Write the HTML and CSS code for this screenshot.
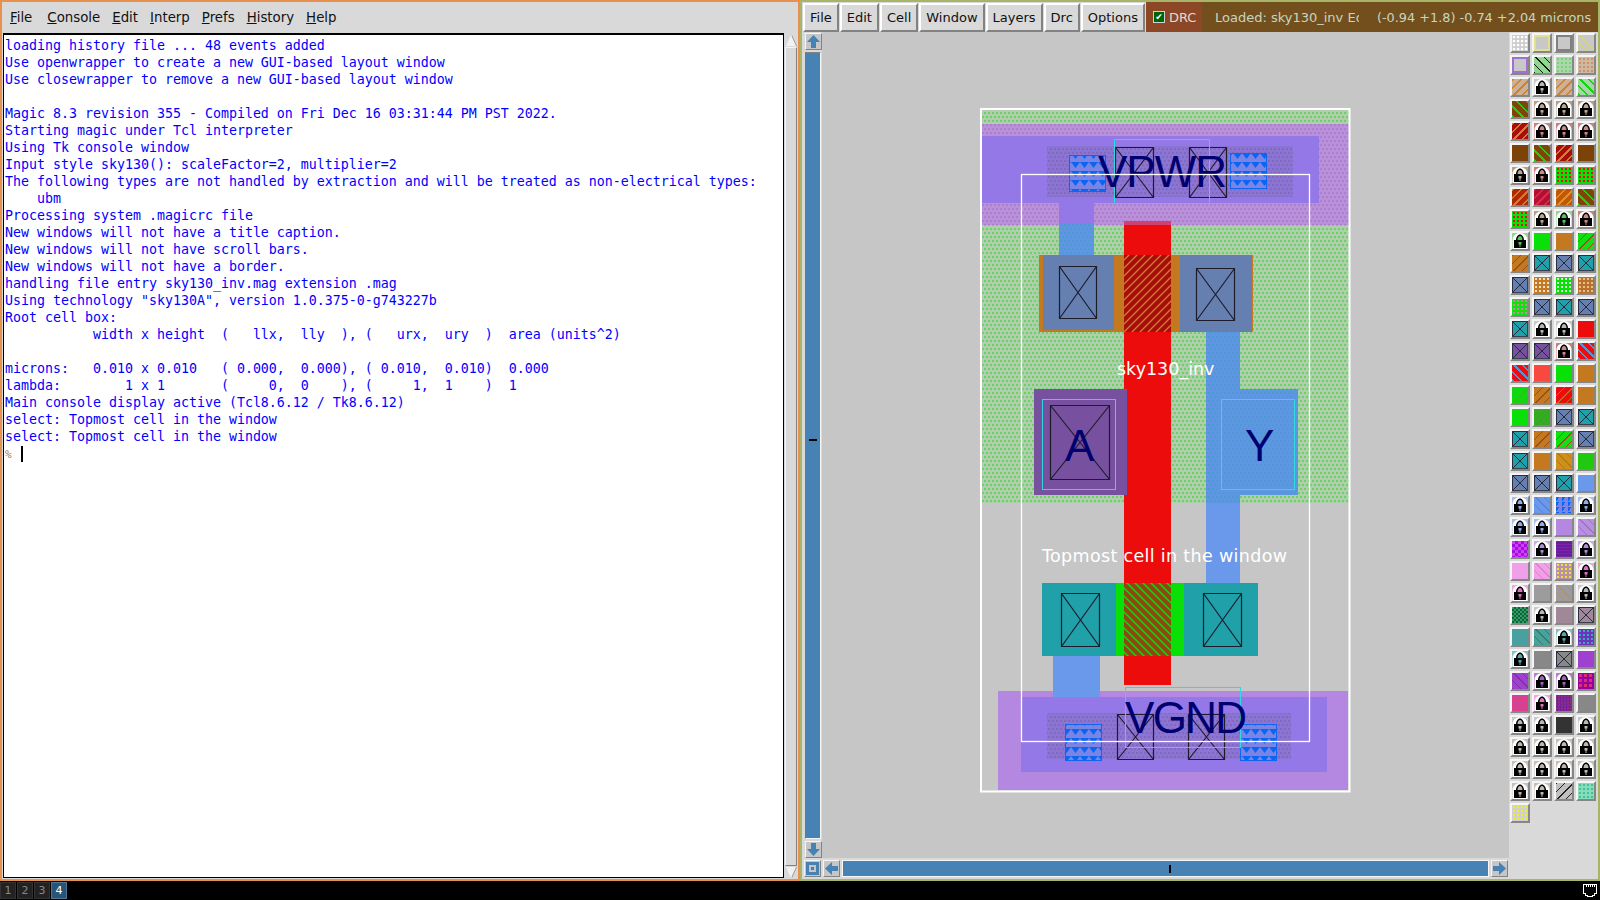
FILE: index.html
```html
<!DOCTYPE html>
<html lang="en">
<head>
    <meta charset="UTF-8">
    <title>Magic layout - sky130_inv</title>
    <link rel="stylesheet" href="styles.css">
</head>
<body>
    <svg class="defs" width="0" height="0">
        <symbol id="lock" viewBox="0 0 16 16">
            <path fill="#fff" d="M.5 16V7C.5 3 4 0 8 0s7.500 3 7.500 7v9z"/>
            <path fill="#000" d="M2 15V7h2C4 4 6 1.500 8 1.500S12 4 12 7h2v8z"/>
            <path fill="currentColor" d="M5.500 7C5.500 5 6.500 3 8 3s2.500 2 2.500 4z"/>
            <path fill="currentColor" d="M6.500 9h3v2.500h-1V14h-1v-2.500h-1z"/>
        </symbol>
    </svg>

    <div class="desktop">
        <!-- tk console -->
        <div class="console">
            <div class="menubar">
                <span class="menu"><u>F</u>ile</span>
                <span class="menu"><u>C</u>onsole</span>
                <span class="menu"><u>E</u>dit</span>
                <span class="menu"><u>I</u>nterp</span>
                <span class="menu"><u>P</u>refs</span>
                <span class="menu"><u>H</u>istory</span>
                <span class="menu"><u>H</u>elp</span>
            </div>
            <div class="console-body">
<pre class="log">loading history file ... 48 events added
Use openwrapper to create a new GUI-based layout window
Use closewrapper to remove a new GUI-based layout window

Magic 8.3 revision 355 - Compiled on Fri Dec 16 03:31:44 PM PST 2022.
Starting magic under Tcl interpreter
Using Tk console window
Input style sky130(): scaleFactor=2, multiplier=2
The following types are not handled by extraction and will be treated as non-electrical types:
    ubm
Processing system .magicrc file
New windows will not have a title caption.
New windows will not have scroll bars.
New windows will not have a border.
handling file entry sky130_inv.mag extension .mag
Using technology "sky130A", version 1.0.375-0-g743227b
Root cell box:
           width x height  (   llx,  lly  ), (   urx,  ury  )  area (units^2)

microns:   0.010 x 0.010   ( 0.000,  0.000), ( 0.010,  0.010)  0.000
lambda:        1 x 1       (     0,  0    ), (     1,  1    )  1
Main console display active (Tcl8.6.12 / Tk8.6.12)
select: Topmost cell in the window
select: Topmost cell in the window
<span class="prompt">%</span> <span class="cursor"></span></pre>
                <div class="vbar">
                    <div class="tri-up"></div>
                    <div class="vbar-thumb"></div>
                    <div class="tri-down"></div>
                </div>
            </div>
        </div>

        <!-- layout window -->
        <div class="layout-win">
            <div class="toolbar">
                <span class="btn">File</span>
                <span class="btn">Edit</span>
                <span class="btn">Cell</span>
                <span class="btn">Window</span>
                <span class="btn">Layers</span>
                <span class="btn">Drc</span>
                <span class="btn">Options</span>
                <span class="drc"><span class="check">&#10004;</span>DRC</span>
                <div class="status">
                    <span class="loaded">Loaded: sky130_inv Ed</span>
                    <span class="coords">(-0.94 +1.8) -0.74 +2.04 microns</span>
                </div>
            </div>

            <div class="work">
                <div class="yscroll">
                    <span class="arrow"><svg viewBox="0 0 13 13"><path fill="#4682b4" d="M6.500 0 13 7H9v6H4V7H0z"/></svg></span>
                    <div class="ythumb"><span class="ynotch"></span></div>
                    <span class="arrow"><svg viewBox="0 0 13 13"><path fill="#4682b4" d="M6.500 13 0 6h4V0h5v6h4z"/></svg></span>
                </div>

                <div class="canvas">
                    <svg class="chip" viewBox="822 32 687 826">
                        <defs>
                            <pattern id="dots" width="8" height="8" patternUnits="userSpaceOnUse">
                                <rect width="8" height="8" fill="#b0ceac"/>
                                <path fill="#68d468" d="M0 0h2v2H0zM4 0h2v2H4zM2 4h2v2H2zM6 4h2v2H6z"/>
                            </pattern>
                            <pattern id="pinkdots" width="8" height="8" patternUnits="userSpaceOnUse">
                                <rect width="8" height="8" fill="#b792da"/>
                                <path fill="#b07ccb" d="M0 0h2v2H0zM4 0h2v2H4zM2 4h2v2H2zM6 4h2v2H6z"/>
                            </pattern>
                            <pattern id="bluedots" width="8" height="8" patternUnits="userSpaceOnUse">
                                <rect width="8" height="8" fill="#5f96e4"/>
                                <path fill="#4f9ad0" d="M0 0h2v2H0zM4 0h2v2H4zM2 4h2v2H2zM6 4h2v2H6z"/>
                            </pattern>
                            <pattern id="darkdots" width="8" height="8" patternUnits="userSpaceOnUse">
                                <rect width="8" height="8" fill="#8a74d4"/>
                                <path fill="#8468bc" d="M0 0h2v2H0zM4 0h2v2H4zM2 4h2v2H2zM6 4h2v2H6z"/>
                            </pattern>
                            <pattern id="hatch" width="9" height="9" patternUnits="userSpaceOnUse">
                                <rect width="9" height="9" fill="#7a84e4"/>
                                <path fill="#0a64f4" d="M0 0h9L4.500 6z"/>
                            </pattern>
                            <pattern id="pgate" width="8" height="8" patternUnits="userSpaceOnUse">
                                <rect width="8" height="8" fill="#a80c0c"/>
                                <path stroke="#c88428" stroke-width="1.300" d="M-1 9 9-1M-1 1 1-1M7 9l2-2"/>
                            </pattern>
                            <pattern id="ngate" width="8" height="8" patternUnits="userSpaceOnUse">
                                <rect width="8" height="8" fill="#8a4a10"/>
                                <path stroke="#10d810" stroke-width="1.500" d="M-1-1 9 9M-1 7 1 9M7-1l2 2"/>
                            </pattern>
                        </defs>

                        <!-- nwell -->
                        <rect x="982" y="110" width="367" height="393" fill="url(#dots)"/>

                        <!-- power rail -->
                        <rect x="982" y="124" width="367" height="101" fill="url(#pinkdots)"/>
                        <rect x="982" y="136" width="337" height="67" fill="#9478e8"/>
                        <rect x="1047" y="146" width="246" height="51" fill="url(#darkdots)"/>
                        <rect x="1059" y="203" width="35" height="21" fill="#9478e8"/>
                        <rect x="1059" y="224" width="35" height="31" fill="url(#bluedots)"/>
                        <rect x="1069.500" y="155.500" width="36" height="36" fill="url(#hatch)" stroke="#0f66f0"/>
                        <rect x="1230.500" y="153.500" width="36" height="35" fill="url(#hatch)" stroke="#0f66f0"/>

                        <!-- poly -->
                        <rect x="1124" y="221" width="47" height="464" fill="#ec0c0c"/>
                        <rect x="1124" y="221" width="47" height="4" fill="#d24070"/>

                        <!-- pmos -->
                        <rect x="1039" y="255" width="214" height="77" fill="#c47820"/>
                        <rect x="1043" y="255" width="71" height="75" fill="#6580b0"/>
                        <rect x="1180" y="255" width="72" height="77" fill="#6580b0"/>
                        <rect x="1124" y="255" width="47" height="77" fill="url(#pgate)"/>

                        <!-- output strap and pins -->
                        <rect x="1206" y="332" width="34" height="171" fill="url(#bluedots)"/>
                        <rect x="1206" y="503" width="34" height="80" fill="#6a98ea"/>
                        <rect x="1206" y="389" width="92" height="106" fill="url(#bluedots)"/>
                        <rect x="1034" y="389" width="93" height="106" fill="#7850a0"/>

                        <!-- nmos -->
                        <rect x="1053" y="656" width="47" height="41" fill="#6a98ea"/>
                        <rect x="1042" y="583" width="216" height="73" fill="#20a0a8"/>
                        <rect x="1116" y="583" width="68" height="73" fill="#08e008"/>
                        <rect x="1124" y="583" width="47" height="73" fill="url(#ngate)"/>

                        <!-- ground rail -->
                        <rect x="998" y="691" width="350" height="99" fill="#b488e0"/>
                        <rect x="1053" y="691" width="47" height="6" fill="#6a98ea"/>
                        <rect x="1021" y="697" width="306" height="75" fill="#9478e8"/>
                        <rect x="1047" y="713" width="244" height="46" fill="url(#darkdots)"/>
                        <rect x="1065.500" y="724.500" width="36" height="36" fill="url(#hatch)" stroke="#0f66f0"/>
                        <rect x="1240.500" y="724.500" width="36" height="36" fill="url(#hatch)" stroke="#0f66f0"/>

                        <!-- contact cuts -->
                        <g fill="none" stroke="#1c1c2c" stroke-width="1.200">
                            <path d="M1115.500 147.500h38v50h-38zM1115.500 147.500l38 50M1153.500 147.500l-38 50"/>
                            <path d="M1189.500 147.500h37v50h-37zM1189.500 147.500l37 50M1226.500 147.500l-37 50"/>
                            <path d="M1059.500 266.500h37v52h-37zM1059.500 266.500l37 52M1096.500 266.500l-37 52"/>
                            <path d="M1196.500 268.500h38v52h-38zM1196.500 268.500l38 52M1234.500 268.500l-38 52"/>
                            <path d="M1050.500 405.500h59v74h-59zM1050.500 405.500l59 74M1109.500 405.500l-59 74"/>
                            <path d="M1061.500 593.500h38v53h-38zM1061.500 593.500l38 53M1099.500 593.500l-38 53"/>
                            <path d="M1203.500 593.500h38v53h-38zM1203.500 593.500l38 53M1241.500 593.500l-38 53"/>
                            <path d="M1117.500 714.500h36v45h-36zM1117.500 714.500l36 45M1153.500 714.500l-36 45"/>
                            <path d="M1188.500 714.500h36v45h-36zM1188.500 714.500l36 45M1224.500 714.500l-36 45"/>
                        </g>

                        <!-- port boxes -->
                        <g fill="none" stroke="#30d8e0">
                            <rect x="1114.500" y="139.500" width="95" height="64"/>
                            <rect x="1042.500" y="399.500" width="73" height="90"/>
                            <rect x="1221.500" y="399.500" width="73" height="90"/>
                            <rect x="1125.500" y="687.500" width="115" height="60"/>
                        </g>

                        <g class="pin-label">
                            <text x="1098" y="187" textLength="129">VPWR</text>
                            <text x="1065" y="461">A</text>
                            <text x="1245" y="461">Y</text>
                            <text x="1125" y="733" textLength="122">VGND</text>
                        </g>

                        <!-- cell bounding box and selection -->
                        <rect x="981" y="109" width="368.500" height="682.500" fill="none" stroke="#fff" stroke-width="2"/>
                        <rect x="1021.500" y="174.500" width="288" height="567" fill="none" stroke="#fff" stroke-width="1.300"/>
                        <text class="cell-label" x="1117" y="375">sky130_inv</text>
                        <text class="cell-label" x="1042" y="562" textLength="245">Topmost cell in the window</text>
                    </svg>
                </div>

                <div class="xscroll">
                    <span class="arrow"><svg viewBox="0 0 13 13"><path fill="#4682b4" fill-rule="evenodd" d="M0 0h13v13H0zM3 3v7h7V3zM5 5h3v3H5z"/></svg></span>
                    <span class="arrow"><svg viewBox="0 0 13 13"><path fill="#4682b4" d="M0 6.500 7 0v4h6v5H7v4z"/></svg></span>
                    <div class="xthumb"><span class="xnotch"></span></div>
                    <span class="arrow"><svg viewBox="0 0 13 13"><path fill="#4682b4" d="M13 6.500 6 13V9H0V4h6V0z"/></svg></span>
                </div>

                <div class="palette">
                    <i class="sw s-grid"></i><i class="sw s-ybox"></i><i class="sw s-gbox"></i><i class="sw s-yst"></i>
                    <i class="sw s-pbox"></i><i class="sw s-gblk"></i><i class="sw s-gdots"></i><i class="sw s-tdots"></i>
                    <i class="sw s-tanst"></i><i class="sw l-gray"><svg><use href="#lock"/></svg></i><i class="sw s-tanst"></i><i class="sw s-gst"></i>
                    <i class="sw s-brnst"></i><i class="sw l-tan"><svg><use href="#lock"/></svg></i><i class="sw l-tan"><svg><use href="#lock"/></svg></i><i class="sw l-tan"><svg><use href="#lock"/></svg></i>
                    <i class="sw s-redst"></i><i class="sw l-pink"><svg><use href="#lock"/></svg></i><i class="sw l-pink"><svg><use href="#lock"/></svg></i><i class="sw l-pink"><svg><use href="#lock"/></svg></i>
                    <i class="sw s-brn"></i><i class="sw s-brnst"></i><i class="sw s-redst"></i><i class="sw s-brn"></i>
                    <i class="sw l-tan"><svg><use href="#lock"/></svg></i><i class="sw l-pink"><svg><use href="#lock"/></svg></i><i class="sw s-grd"></i><i class="sw s-grd"></i>
                    <i class="sw s-rbst"></i><i class="sw s-crst"></i><i class="sw s-orst"></i><i class="sw s-brnst"></i>
                    <i class="sw s-grd"></i><i class="sw l-tan"><svg><use href="#lock"/></svg></i><i class="sw l-grn"><svg><use href="#lock"/></svg></i><i class="sw l-pink"><svg><use href="#lock"/></svg></i>
                    <i class="sw l-grn"><svg><use href="#lock"/></svg></i><i class="sw s-green"></i><i class="sw s-orange"></i><i class="sw s-grst"></i>
                    <i class="sw s-obst"></i><i class="sw s-teal x"></i><i class="sw s-slate x"></i><i class="sw s-teal x"></i>
                    <i class="sw s-slate x"></i><i class="sw s-owd"></i><i class="sw s-gwd"></i><i class="sw s-opd"></i>
                    <i class="sw s-gpd"></i><i class="sw s-slate x"></i><i class="sw s-teal x"></i><i class="sw s-slate x"></i>
                    <i class="sw s-teal x"></i><i class="sw l-gray"><svg><use href="#lock"/></svg></i><i class="sw l-gray"><svg><use href="#lock"/></svg></i><i class="sw s-red"></i>
                    <i class="sw s-purple x"></i><i class="sw s-purple x"></i><i class="sw l-pink"><svg><use href="#lock"/></svg></i><i class="sw s-rbl"></i>
                    <i class="sw s-rbl"></i><i class="sw s-coral"></i><i class="sw s-green"></i><i class="sw s-orange"></i>
                    <i class="sw s-g2st"></i><i class="sw s-obst"></i><i class="sw s-rost"></i><i class="sw s-orange"></i>
                    <i class="sw s-green"></i><i class="sw s-g3st"></i><i class="sw s-slate x"></i><i class="sw s-teal x"></i>
                    <i class="sw s-teal x"></i><i class="sw s-obst"></i><i class="sw s-grst"></i><i class="sw s-slate x"></i>
                    <i class="sw s-teal x"></i><i class="sw s-orange"></i><i class="sw s-gold"></i><i class="sw s-g4"></i>
                    <i class="sw s-slate x"></i><i class="sw s-slate x"></i><i class="sw s-teal x"></i><i class="sw s-corn"></i>
                    <i class="sw l-blue"><svg><use href="#lock"/></svg></i><i class="sw s-cornst"></i><i class="sw s-hatch"></i><i class="sw l-blue"><svg><use href="#lock"/></svg></i>
                    <i class="sw l-blue"><svg><use href="#lock"/></svg></i><i class="sw l-blue"><svg><use href="#lock"/></svg></i><i class="sw s-lav"></i><i class="sw s-lavst"></i>
                    <i class="sw s-mag"></i><i class="sw l-lav"><svg><use href="#lock"/></svg></i><i class="sw s-purst"></i><i class="sw l-lav"><svg><use href="#lock"/></svg></i>
                    <i class="sw s-pink"></i><i class="sw s-pinkst"></i><i class="sw s-ymauve"></i><i class="sw l-rose"><svg><use href="#lock"/></svg></i>
                    <i class="sw l-rose"><svg><use href="#lock"/></svg></i><i class="sw s-gray"></i><i class="sw s-grayst"></i><i class="sw l-gray"><svg><use href="#lock"/></svg></i>
                    <i class="sw s-dgreen"></i><i class="sw l-gray"><svg><use href="#lock"/></svg></i><i class="sw s-mauve"></i><i class="sw s-mauve x"></i>
                    <i class="sw s-teal2"></i><i class="sw s-teal2st"></i><i class="sw l-teal"><svg><use href="#lock"/></svg></i><i class="sw s-purtl"></i>
                    <i class="sw l-teal"><svg><use href="#lock"/></svg></i><i class="sw s-gray2"></i><i class="sw s-gray2 x"></i><i class="sw s-purp"></i>
                    <i class="sw s-purpst"></i><i class="sw l-vio"><svg><use href="#lock"/></svg></i><i class="sw l-vio"><svg><use href="#lock"/></svg></i><i class="sw s-magred"></i>
                    <i class="sw s-hot"></i><i class="sw l-rose"><svg><use href="#lock"/></svg></i><i class="sw s-dkpur"></i><i class="sw s-gray2"></i>
                    <i class="sw l-gray"><svg><use href="#lock"/></svg></i><i class="sw l-gray"><svg><use href="#lock"/></svg></i><i class="sw s-dk"></i><i class="sw l-gray"><svg><use href="#lock"/></svg></i>
                    <i class="sw l-sand"><svg><use href="#lock"/></svg></i><i class="sw l-sand"><svg><use href="#lock"/></svg></i><i class="sw l-sand"><svg><use href="#lock"/></svg></i><i class="sw l-sand"><svg><use href="#lock"/></svg></i>
                    <i class="sw l-sand"><svg><use href="#lock"/></svg></i><i class="sw l-sand"><svg><use href="#lock"/></svg></i><i class="sw l-sand"><svg><use href="#lock"/></svg></i><i class="sw l-sand"><svg><use href="#lock"/></svg></i>
                    <i class="sw l-sand"><svg><use href="#lock"/></svg></i><i class="sw l-sand"><svg><use href="#lock"/></svg></i><i class="sw s-blkst"></i><i class="sw s-mint"></i>
                    <i class="sw s-ydots"></i>
                </div>
            </div>
        </div>
    </div>

    <!-- i3 bar -->
    <div class="taskbar">
        <div class="workspaces">
            <span class="ws">1</span>
            <span class="ws">2</span>
            <span class="ws">3</span>
            <span class="ws ws-on">4</span>
        </div>
        <svg class="net" viewBox="0 0 14 13"><path fill="#fff" fill-rule="evenodd" d="M0 0h14v10h-2v2h-2v1H4v-1H2v-2H0zM1 1v8h2v2h2v1h4v-1h2V9h2V1h-1v2h-1V1h-1v2H9V1H8v2H7V1H6v2H5V1H4v2H3V1z"/></svg>
    </div>
</body>
</html>
```

FILE: styles.css
```css
* {
    box-sizing: border-box;
}
html, body {
    margin: 0;
    padding: 0;
}
body {
    width: 1600px;
    height: 900px;
    overflow: hidden;
    background-color: #000;
    font-family: "DejaVu Sans", sans-serif;
    font-size: 13.33px;
    color: #111;
}
.defs {
    position: absolute;
}
.desktop {
    display: flex;
    height: 881px;
}

/* console window */
.console {
    display: flex;
    flex-direction: column;
    width: 800px;
    border: 2px solid #e8914f;
    background-color: #d9d9d9;
}
.menubar {
    display: flex;
    align-items: center;
    height: 31px;
    padding-left: 2px;
}
.menu {
    padding: 0 6px;
}
.menu:first-child {
    margin-right: 3px;
}
.console-body {
    display: flex;
    flex: 1;
    min-height: 0;
    padding-bottom: 1px;
}
.log {
    flex: 1;
    min-width: 0;
    margin: 0 1px 0 1px;
    padding: 2px 0 0 1px;
    overflow: hidden;
    border: 1px solid #000;
    border-top-width: 2px;
    background-color: #fff;
    color: #00f;
    font-family: "DejaVu Sans Mono", monospace;
    font-size: 13.29px;
    line-height: 17px;
}
.prompt {
    color: #a8784c;
    font-size: 11px;
}
.cursor {
    display: inline-block;
    width: 2px;
    height: 16px;
    margin-left: 1px;
    background-color: #000;
    vertical-align: -4px;
}
.vbar {
    display: flex;
    flex-direction: column;
    flex: none;
    width: 12px;
    margin-right: 1px;
}
.tri-up, .tri-down {
    flex: none;
    width: 0;
    height: 0;
    margin-left: 1px;
    border-left: 5px solid transparent;
    border-right: 5px solid transparent;
    filter: drop-shadow(1px 0 0 #9a9a9a);
}
.tri-up {
    margin-top: 2px;
    border-bottom: 11px solid #f2f2f2;
}
.tri-down {
    border-top: 11px solid #f2f2f2;
}
.vbar-thumb {
    flex: 1;
    margin: 1px 0;
    border: 1px solid;
    border-color: #f5f5f5 #828282 #828282 #f5f5f5;
}

/* layout window */
.layout-win {
    display: flex;
    flex-direction: column;
    width: 800px;
    border: 2px solid #a8b468;
    background-color: #d9d9d9;
}
.toolbar {
    display: flex;
    flex: none;
    height: 30px;
    font-size: 13px;
}
.btn {
    display: flex;
    align-items: center;
    margin: 1px 0 0 1px;
    padding: 0 5px;
    border: 2px solid;
    border-color: #fff #828282 #828282 #fff;
}
.drc {
    display: flex;
    align-items: center;
    gap: 4px;
    width: 56px;
    margin-left: 1px;
    padding-left: 7px;
    background-color: #8b4726;
    color: #e0dcd4;
}
.check {
    display: flex;
    align-items: center;
    justify-content: center;
    width: 12px;
    height: 12px;
    flex: none;
    border: 1px solid #d0d0d0;
    background-color: #006400;
    color: #fff;
    font-size: 9px;
    line-height: 1;
}
.status {
    display: flex;
    flex: 1;
    min-width: 0;
    align-items: center;
    padding-left: 13px;
    background-color: #734f1e;
    color: #c6d6c0;
}
.loaded {
    width: 144px;
    overflow: hidden;
    white-space: nowrap;
}
.coords {
    margin-left: 18px;
    font-size: 12.85px;
    white-space: nowrap;
}

.work {
    display: grid;
    flex: 1;
    min-height: 0;
    grid-template-columns: 20px 1fr 89px;
    grid-template-rows: 1fr 21px;
}
.yscroll {
    display: flex;
    flex-direction: column;
    align-items: flex-start;
    padding: 1px 0 0 3px;
}
.canvas {
    min-width: 0;
    min-height: 0;
    background-color: #c6c6c6;
}
.chip {
    display: block;
    width: 687px;
    height: 826px;
}
.pin-label text {
    fill: #000070;
    font-family: "Liberation Sans", sans-serif;
    font-size: 44px;
}
.cell-label {
    fill: #fff;
    font-family: "DejaVu Sans", sans-serif;
    font-size: 17.500px;
}
.xscroll {
    display: flex;
    grid-column: 1 / 3;
    align-items: center;
    gap: 2px;
    padding: 0 1px 0 2px;
}
.arrow {
    display: flex;
    align-items: center;
    justify-content: center;
    flex: none;
    width: 17px;
    height: 17px;
    border: 1px solid;
    border-color: #f5f5f5 #828282 #828282 #f5f5f5;
    background-color: #c6c6c6;
}
.arrow svg {
    display: block;
    width: 13px;
    height: 13px;
}
.ythumb {
    position: relative;
    flex: 1;
    width: 16px;
    margin: 2px 0 2px;
    border: 1px solid;
    border-color: #828282 #f5f5f5 #f5f5f5 #4682b4;
    background-color: #4682b4;
}
.ynotch {
    position: absolute;
    top: 386px;
    left: 3px;
    width: 8px;
    height: 2px;
    background-color: #000;
}
.xthumb {
    position: relative;
    flex: 1;
    height: 17px;
    border: 1px solid;
    border-color: #f5f5f5;
    background-color: #4682b4;
}
.xnotch {
    position: absolute;
    top: 4px;
    left: 326px;
    width: 2px;
    height: 8px;
    background-color: #000;
}
.palette {
    display: grid;
    grid-column: 3;
    grid-row: 1 / 3;
    grid-template-columns: repeat(4, 20px);
    grid-auto-rows: 20px;
    gap: 2px;
    align-content: start;
    padding: 1px 0 0 1px;
}

/* layer swatches */
.sw {
    display: block;
    width: 20px;
    height: 20px;
    border: 2px solid;
    border-color: #f5f5f5 #868686 #868686 #f5f5f5;
}
.sw svg {
    display: block;
    width: 16px;
    height: 16px;
}
.x {
    background-image:
        linear-gradient(45deg, transparent 47%, #262a3a 47% 53%, transparent 53%),
        linear-gradient(-45deg, transparent 47%, #262a3a 47% 53%, transparent 53%);
    box-shadow: inset 1px 1px 0 #2a3040, inset -1px -1px 0 #3a4050;
}
.l-gray { background-color: #c8c8c8; color: #b8b8b8; }
.l-tan { background-color: #b8a088; color: #bfa890; }
.l-pink { background-color: #cc8080; color: #cc8888; }
.l-grn { background-color: #90d890; color: #58c458; }
.l-blue { background-color: #a8c0ec; color: #90b0e8; }
.l-lav { background-color: #c8b0e0; color: #b090d8; }
.l-rose { background-color: #f0a8e0; color: #e070c0; }
.l-teal { background-color: #88c0c0; color: #50a8a8; }
.l-vio { background-color: #b880d0; color: #a060c0; }
.l-sand { background-color: #c8c0b8; color: #c0b8b0; }

.s-grid { background: radial-gradient(circle at 1px 1px, #fff 1.500px, transparent 1.600px) 1px 1px / 4px 4px #cfcfcf; }
.s-ybox { background-color: #c8c8c8; box-shadow: inset 0 0 0 2px #e0e090; }
.s-gbox { background-color: #c8c8c8; box-shadow: inset 0 0 0 2px #808080; }
.s-yst { background: repeating-linear-gradient(45deg, #d8d870 0 1px, #c8c8c8 1px 6px); }
.s-pbox { background-color: #c8c8c8; box-shadow: inset 0 0 0 2px #a070d0; }
.s-gblk { background: repeating-linear-gradient(45deg, #101810 0 1px, #90d890 1px 6px); }
.s-gdots { background: radial-gradient(circle, #70d870 1.200px, transparent 1.300px) 0 0 / 4px 4px #b0d4b0; }
.s-tdots { background: radial-gradient(circle, #d09060 1.200px, transparent 1.300px) 0 0 / 4px 4px #ccb8a4; }
.s-tanst { background: repeating-linear-gradient(135deg, #d08428 0 1.500px, #ccb09a 1.500px 6px); }
.s-gst { background: repeating-linear-gradient(45deg, #10d810 0 1.500px, #a8d4a8 1.500px 6px); }
.s-brnst { background: repeating-linear-gradient(45deg, #10d810 0 1.500px, #804408 1.500px 7px); }
.s-redst { background: repeating-linear-gradient(135deg, #c88428 0 1.500px, #a80c0c 1.500px 6px); }
.s-brn { background-color: #7c4308; }
.s-grd { background: radial-gradient(circle, #e81010 1.300px, transparent 1.400px) 0 0 / 4px 4px #08e008; }
.s-rbst { background: repeating-linear-gradient(135deg, #d08020 0 1.500px, #b02808 1.500px 6px); }
.s-crst { background: repeating-linear-gradient(135deg, #d03050 0 1.500px, #b80c30 1.500px 6px); }
.s-orst { background: repeating-linear-gradient(135deg, #e09020 0 1.500px, #c05808 1.500px 6px); }
.s-green { background-color: #08e008; }
.s-orange { background-color: #c47820; }
.s-grst { background: repeating-linear-gradient(135deg, #a84820 0 1px, #10e010 1px 6px); }
.s-obst { background: repeating-linear-gradient(135deg, #94501c 0 1px, #c47820 1px 6px); }
.s-teal { background-color: #20a0a8; }
.s-slate { background-color: #6580b0; }
.s-owd { background: radial-gradient(circle, #f0e0d0 1.200px, transparent 1.300px) 0 0 / 4px 4px #c47820; }
.s-gwd { background: radial-gradient(circle, #e0f0e0 1.200px, transparent 1.300px) 0 0 / 4px 4px #08e008; }
.s-opd { background: radial-gradient(circle, #e8c080 1.200px, transparent 1.300px) 0 0 / 4px 4px #b87030; }
.s-gpd { background: radial-gradient(circle, #d088a0 1.300px, transparent 1.400px) 0 0 / 4px 4px #10e010; }
.s-red { background-color: #ec0c0c; }
.s-purple { background-color: #7850a0; }
.s-rbl { background: repeating-linear-gradient(45deg, #6090d0 0 1.500px, #f00c0c 1.500px 6px); }
.s-coral { background-color: #f84840; }
.s-g2st { background: repeating-linear-gradient(135deg, #30c010 0 1px, #10d810 1px 6px); }
.s-rost { background: repeating-linear-gradient(135deg, #b87020 0 1px, #ec0c0c 1px 6px); }
.s-g3st { background: repeating-linear-gradient(135deg, #40a028 0 1.500px, #30b020 1.500px 4px); }
.s-gold { background: repeating-linear-gradient(45deg, #b07820 0 1px, #d09018 1px 6px); }
.s-g4 { background-color: #20c810; }
.s-corn { background-color: #6a98ea; }
.s-cornst { background: repeating-linear-gradient(45deg, #5a80d8 0 1px, #6a98ea 1px 6px); }
.s-hatch { background: repeating-conic-gradient(from 150deg at 50% 0, #7a84e4 0 60deg, #0a64f4 60deg 120deg, #7a84e4 120deg 180deg) 0 0 / 6px 5px #0a64f4; }
.s-lav { background-color: #b488e0; }
.s-lavst { background: repeating-linear-gradient(45deg, #a070c8 0 1px, #b890e0 1px 6px); }
.s-mag { background: repeating-conic-gradient(#a010e0 0 25%, #d040f0 0 50%) 0 0 / 6px 6px; }
.s-purst { background: repeating-linear-gradient(0deg, #8020b0 0 1px, #681e98 1px 3px); }
.s-pink { background-color: #f0a0e8; }
.s-pinkst { background: repeating-linear-gradient(45deg, #e080c8 0 1px, #f0a0e8 1px 6px); }
.s-ymauve { background: radial-gradient(circle, #f0e030 1.200px, transparent 1.300px) 0 0 / 4px 4px #b890a8; }
.s-gray { background-color: #9c9c9c; }
.s-grayst { background: repeating-linear-gradient(45deg, #b09070 0 1px, #9c9c9c 1px 6px); }
.s-dgreen { background: repeating-conic-gradient(#106040 0 25%, #30a060 0 50%) 0 0 / 4px 4px; }
.s-mauve { background-color: #a08898; }
.s-teal2 { background-color: #48a0a0; }
.s-teal2st { background: repeating-linear-gradient(45deg, #308060 0 1px, #48a0a0 1px 6px); }
.s-purtl { background: radial-gradient(circle, #30b0b0 1.200px, transparent 1.300px) 0 0 / 4px 4px #7030c0; }
.s-gray2 { background-color: #888; }
.s-purp { background-color: #a040d0; }
.s-purpst { background: repeating-linear-gradient(45deg, #8030a0 0 1px, #a040d0 1px 6px); }
.s-magred { background: radial-gradient(circle, #d83070 1.500px, transparent 1.600px) 0 0 / 5px 5px #9800a0; }
.s-hot { background-color: #d84090; }
.s-dkpur { background: repeating-conic-gradient(#7020a0 0 25%, #903080 0 50%) 0 0 / 3px 3px; }
.s-dk { background-color: #333; }
.s-blkst { background: repeating-linear-gradient(135deg, #222 0 1px, #c0c0c0 1px 6px); }
.s-mint { background: radial-gradient(circle, #40c0a0 1.200px, transparent 1.300px) 0 0 / 4px 4px #88dcb8; }
.s-ydots { background: radial-gradient(circle, #f0f020 1.200px, transparent 1.300px) 0 0 / 4px 4px #d0d0d0; }

/* i3 bar */
.taskbar {
    display: flex;
    align-items: center;
    justify-content: space-between;
    height: 19px;
    padding: 0 3px 0 0;
}
.workspaces {
    display: flex;
    gap: 1px;
}
.ws {
    display: flex;
    align-items: center;
    justify-content: center;
    width: 16px;
    height: 17px;
    border: 1px solid #333;
    background-color: #222;
    color: #888;
    font-size: 11px;
}
.ws-on {
    border-color: #4c7899;
    background-color: #285577;
    color: #fff;
}
.net {
    display: block;
    width: 14px;
    height: 13px;
}
```
